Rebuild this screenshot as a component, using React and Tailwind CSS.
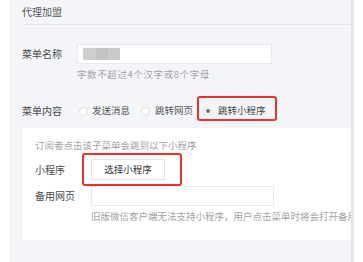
export default function App() {
  const font = "font-['Noto_Sans_CJK_SC','Noto_Sans',sans-serif]";
  return (
    <div className={`flex h-[262px] w-[363px] overflow-hidden bg-white ${font}`}>
      <div className="w-[9px] shrink-0 bg-white" />
      <div className="relative flex w-[342px] shrink-0 flex-col overflow-hidden bg-[#f4f5f9]">
        <div className="ml-[13px] flex h-[25px] items-center border-b border-[#e8e9ed] text-[10px] leading-none text-[#555]">
          代理加盟
        </div>

        <div className="mt-[19px] flex pl-[13px]">
          <div className="flex h-[20px] w-[55px] items-center text-[10px] leading-none text-[#4a4a4a]">菜单名称</div>
          <div className="flex h-[20px] w-[195px] items-center border border-[#e8e9ed] bg-white pl-[5px]">
            <div className="flex blur-[0.6px]">
              <div className="h-[12px] w-[13px] bg-[#cfcecd]" />
              <div className="h-[12px] w-[12px] bg-[#c3c3c3]" />
              <div className="h-[12px] w-[12px] bg-[#cbcaca]" />
            </div>
          </div>
        </div>
        <div className="ml-[68px] mt-[4px] whitespace-nowrap text-[9.5px] leading-[12px] tracking-[0.6px] text-[#a3a3a3]">
          字数不超过4个汉字或8个字母
        </div>

        <div className="relative mt-[19px] flex h-[24px] items-center pl-[13px]">
          <div className="w-[55px] text-[10px] leading-none text-[#4a4a4a]">菜单内容</div>
          <div className="ml-[2px] h-[9px] w-[9px] rounded-full border border-[#dcdcdc] bg-white" />
          <div className="ml-[4px] whitespace-nowrap text-[9.5px] leading-none text-[#555]">发送消息</div>
          <div className="ml-[11px] h-[9px] w-[9px] rounded-full border border-[#dcdcdc] bg-white" />
          <div className="ml-[5px] whitespace-nowrap text-[9.5px] leading-none text-[#555]">跳转网页</div>
          <div className="ml-[10px] flex h-[9px] w-[9px] items-center justify-center rounded-full border border-[#e2e2e2] bg-white">
            <div className="h-[4px] w-[4px] rounded-full bg-[#6f6f6f]" />
          </div>
          <div className="ml-[6px] whitespace-nowrap text-[9.5px] leading-none text-[#444]">跳转小程序</div>
          <div className="pointer-events-none absolute left-[188px] top-[-3px] h-[25px] w-[80px] rounded-[3px] border-2 border-[#e8322b]" />
        </div>

        <div className="ml-[14px] mt-[5px] h-[112px] w-[328px] bg-white pl-[12px] pt-[11px]">
          <div className="whitespace-nowrap text-[9.5px] leading-[12px] text-[#a3a3a3]">
            订阅者点击该子菜单会跳到以下小程序
          </div>
          <div className="relative mt-[8px] flex">
            <div className="flex h-[21px] w-[56px] items-center text-[10px] leading-none text-[#4a4a4a]">小程序</div>
            <div className="flex h-[21px] w-[74px] items-center justify-center border border-[#e2e3e7] bg-white text-[9.5px] leading-none text-[#333]">
              选择小程序
            </div>
            <div className="pointer-events-none absolute left-[47px] top-[-6px] h-[33px] w-[100px] rounded-[3px] border-2 border-[#e8322b]" />
          </div>
          <div className="mt-[6px] flex">
            <div className="flex h-[20px] w-[56px] items-center text-[10px] leading-none text-[#4a4a4a]">备用网页</div>
            <div className="h-[20px] w-[183px] border border-[#e8e9ed] bg-white" />
          </div>
          <div className="ml-[56px] mt-[4px] whitespace-nowrap text-[9.5px] leading-[12px] text-[#a3a3a3]">
            旧版微信客户端无法支持小程序，用户点击菜单时将会打开备用网页
          </div>
        </div>
      </div>
      <div className="w-[3px] shrink-0 bg-[#e4e5e9]" />
      <div className="w-[9px] shrink-0 bg-white" />
    </div>
  );
}
